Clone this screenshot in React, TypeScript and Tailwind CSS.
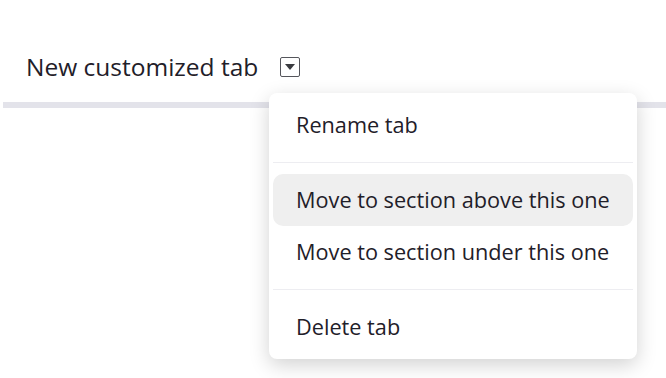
import React from "react";

const items = [
  { label: "Rename tab" },
  { divider: true },
  { label: "Move to section above this one", active: true },
  { label: "Move to section under this one" },
  { divider: true },
  { label: "Delete tab" },
];

export default function App() {
  return (
    <div
      className="relative h-[378px] w-[666px] overflow-hidden bg-white text-[#1f2029]"
      style={{ fontFamily: "'Open Sans', Lato, sans-serif" }}
    >
      <div className="mt-[47px] flex h-[40px] items-center gap-[22px] pl-[26px]">
        <span className="text-[24.5px] leading-none">New customized tab</span>
        <button className="flex h-[20px] w-[20px] items-center justify-center rounded-[2px] border-[1.5px] border-[#55565c] bg-white">
          <svg width="10" height="6" viewBox="0 0 10 6">
            <path d="M0 0h10L5 6z" fill="#3a3b40" />
          </svg>
        </button>
      </div>
      <div className="mt-[15px] ml-[3px] h-[6px] bg-[#e3e3ea]" />

      <div className="absolute left-[269px] top-[93px] w-[368px] rounded-[8px] bg-white px-[4px] py-[6px] shadow-[0_6px_20px_rgba(0,0,0,0.18)]">
        {items.map((it, i) =>
          it.divider ? (
            <div key={i} className="my-[11px] h-px bg-[#ededf1]" />
          ) : (
            <div
              key={i}
              className={`flex h-[52px] items-center rounded-[10px] px-[23px] text-[21.7px] ${
                it.active ? "bg-[#efefef]" : ""
              }`}
            >
              {it.label}
            </div>
          )
        )}
      </div>
    </div>
  );
}
